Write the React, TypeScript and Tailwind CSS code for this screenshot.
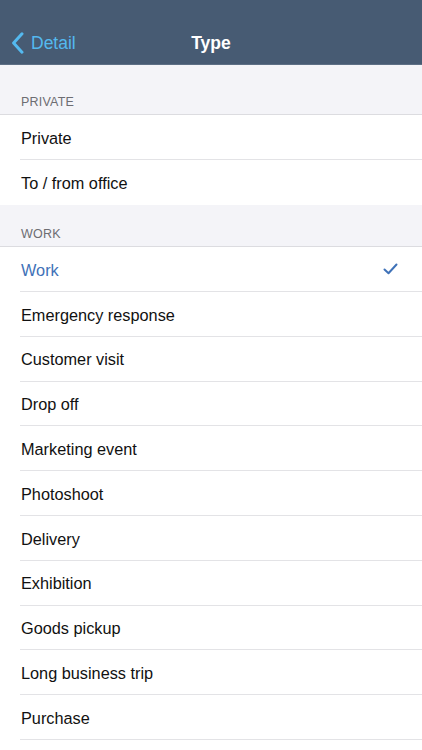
const privateItems = ["Private", "To / from office"]

const workItems = [
  "Work",
  "Emergency response",
  "Customer visit",
  "Drop off",
  "Marketing event",
  "Photoshoot",
  "Delivery",
  "Exhibition",
  "Goods pickup",
  "Long business trip",
  "Purchase",
]

function Row({ label, selected, last }: { label: string; selected?: boolean; last?: boolean }) {
  return (
    <div className="bg-white pl-[20px]">
      <div
        className={
          "h-[44.8px] flex items-center justify-between pr-[24px] " +
          (last ? "" : "border-b border-[#e3e3e6]")
        }
      >
        <span className={"pl-px pt-[2px] text-[16.3px] " + (selected ? "text-[#3f72b8]" : "text-[#111111]")}>{label}</span>
        {selected && (
          <svg width="15" height="12" viewBox="0 0 15 12" fill="none">
            <path d="M1.5 6.5 L5.5 10.2 L13.5 1.5" stroke="#3f72b8" strokeWidth="2" strokeLinecap="round" strokeLinejoin="round" />
          </svg>
        )}
      </div>
    </div>
  )
}

function SectionHeader({ title, className }: { title: string; className: string }) {
  return (
    <div className={"shrink-0 flex items-end px-[21px] pb-[6px] border-b border-[#dcdce0] " + className}>
      <span className="text-[12.5px] leading-none text-[#6d6d72] tracking-[0.2px]">{title}</span>
    </div>
  )
}

export default function App() {
  return (
    <div className="w-[422px] h-[750px] overflow-hidden flex flex-col bg-[#f4f4f8] font-['Liberation_Sans',Arial,sans-serif]">
      <header className="shrink-0 bg-[#475b73] pt-[22px] border-b border-[#5d6f85]">
        <div className="h-[42px] grid grid-cols-[1fr_auto_1fr] items-center">
          <div className="flex items-center pl-[11px] text-[#54b9ef]">
            <svg width="13" height="22" viewBox="0 0 13 22" fill="none">
              <path d="M11 1.8 L2.6 11 L11 20.2" stroke="currentColor" strokeWidth="3" strokeLinecap="round" strokeLinejoin="round" />
            </svg>
            <span className="text-[17.5px] ml-[7px]">Detail</span>
          </div>
          <h1 className="text-[17.5px] font-bold text-white">Type</h1>
          <div />
        </div>
      </header>

      <SectionHeader title="PRIVATE" className="h-[50px]" />
      <div className="shrink-0">
        {privateItems.map((item, i) => (
          <Row key={item} label={item} last={i === privateItems.length - 1} />
        ))}
      </div>

      <SectionHeader title="WORK" className="h-[42.6px]" />
      <div className="flex-1 bg-white">
        {workItems.map((item, i) => (
          <Row key={item} label={item} selected={i === 0} />
        ))}
      </div>
    </div>
  )
}
